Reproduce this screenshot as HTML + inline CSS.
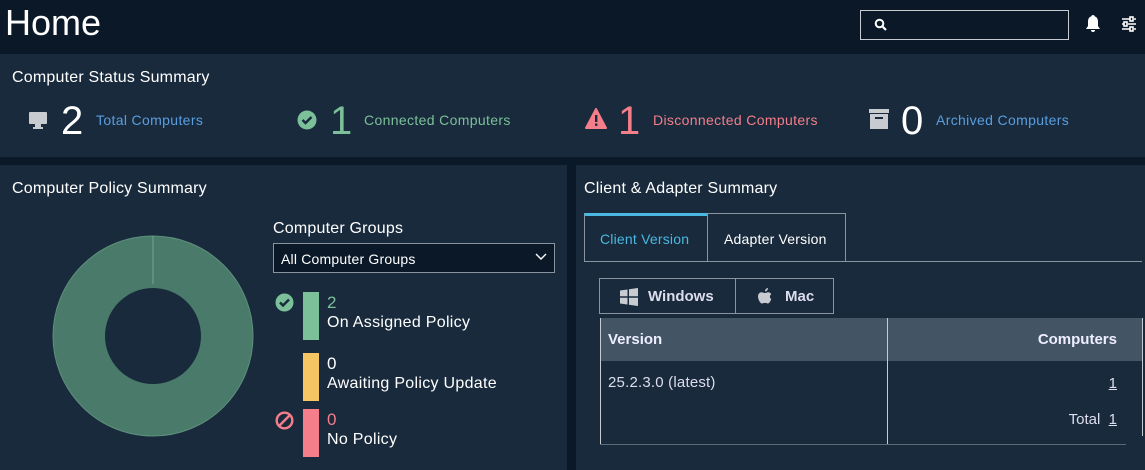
<!DOCTYPE html><html><head><style>
*{margin:0;padding:0;box-sizing:border-box}
body{width:1145px;height:470px;background:#0b1828;font-family:"Liberation Sans",sans-serif;color:#fff;position:relative;overflow:hidden}
.a{position:absolute}
.p{position:absolute;background:#182a3c}
.t{font-size:16px;color:#fff}
</style></head><body>
<div class="a" style="left:5px;top:2px;font-size:36px">Home</div>
<div class="a" style="left:860px;top:10px;width:209px;height:30px;border:1px solid #c8ccd0"></div>
<svg class="a" style="left:874px;top:18px" width="14" height="14"><circle cx="5.5" cy="5.5" r="3.8" stroke="#fff" stroke-width="2" fill="none"/><path d="M8 8l4 4" stroke="#fff" stroke-width="2.2"/></svg>
<svg class="a" style="left:1085px;top:14px" width="16" height="20"><path d="M8 1c-1 0-1.5.6-1.5 1.3C4 3 3 5 3 8v4l-2 3h14l-2-3V8c0-3-1-5-3.5-5.7C9.5 1.6 9 1 8 1zM6 16h4a2 2 0 0 1-4 0z" fill="#fff"/></svg>
<svg class="a" style="left:1121px;top:15px" width="16" height="18"><g stroke="#fff" stroke-width="1.6" fill="none"><path d="M1 4h8M13 4h2M1 9h2M7 9h8M1 14h8M13 14h2"/><rect x="9" y="2" width="3" height="4"/><rect x="3" y="7" width="3" height="4"/><rect x="9" y="12" width="3" height="4"/></g></svg>

<div class="p" style="left:0;top:54px;width:1145px;height:103px"></div>
<div class="a t" style="left:12px;top:69px;letter-spacing:0.2px">Computer Status Summary</div>
<svg class="a" style="left:28px;top:110px" width="22" height="20"><rect x="1" y="2" width="18" height="12" rx="1" fill="#c8ccd0"/><rect x="7" y="14" width="6" height="3" fill="#c8ccd0"/><rect x="5" y="17" width="10" height="2" fill="#c8ccd0"/></svg>
<div class="a" style="left:61px;top:97px;font-size:40px;line-height:48px">2</div>
<div class="a" style="left:96px;top:112px;font-size:14px;color:#5a9ee0;letter-spacing:0.35px">Total Computers</div>
<svg class="a" style="left:297px;top:110px" width="20" height="20"><circle cx="10" cy="10" r="9.5" fill="#7cc09a"/><path d="M5.5 10l3 3 6-6" stroke="#182a3c" stroke-width="2.4" fill="none"/></svg>
<div class="a" style="left:330px;top:97px;font-size:40px;line-height:48px;color:#7cc09a">1</div>
<div class="a" style="left:364px;top:112px;font-size:14px;color:#7cc09a;letter-spacing:0.35px">Connected Computers</div>
<svg class="a" style="left:585px;top:108px" width="22" height="22"><path d="M11 1L21 20H1z" fill="#f47e8a" stroke="#f47e8a" stroke-linejoin="round" stroke-width="2"/><rect x="10" y="7" width="2.4" height="7" fill="#182a3c"/><rect x="10" y="15.5" width="2.4" height="2.4" fill="#182a3c"/></svg>
<div class="a" style="left:618px;top:97px;font-size:40px;line-height:48px;color:#f47e8a">1</div>
<div class="a" style="left:653px;top:112px;font-size:14px;color:#f47e8a;letter-spacing:0.35px">Disconnected Computers</div>
<svg class="a" style="left:868px;top:108px" width="22" height="22"><rect x="1" y="1" width="20" height="4" fill="#c8ccd0"/><rect x="2" y="6" width="18" height="15" fill="#c8ccd0"/><rect x="7" y="9" width="8" height="2" fill="#182a3c"/></svg>
<div class="a" style="left:901px;top:97px;font-size:40px;line-height:48px">0</div>
<div class="a" style="left:936px;top:112px;font-size:14px;color:#5a9ee0;letter-spacing:0.35px">Archived Computers</div>

<div class="p" style="left:0;top:165px;width:567px;height:305px"></div>
<div class="a t" style="left:12px;top:180px;letter-spacing:0.2px">Computer Policy Summary</div>
<svg class="a" style="left:52px;top:235px" width="202" height="202"><circle cx="101" cy="101" r="74" stroke="#4a7a6a" stroke-width="52" fill="none"/><circle cx="101" cy="101" r="100" stroke="#5e907c" stroke-width="1" fill="none"/><path d="M101 1V49" stroke="#6ea08c" stroke-width="1.2"/></svg>
<div class="a t" style="left:273px;top:220px;letter-spacing:0.2px">Computer Groups</div>
<div class="a" style="left:273px;top:243px;width:282px;height:30px;background:#0b1828;border:1px solid #8a949e;font-size:14px;padding:7px 7px;letter-spacing:0.2px">All Computer Groups</div>
<svg class="a" style="left:535px;top:253px" width="12" height="8"><path d="M1 1l5 5 5-5" stroke="#fff" stroke-width="1.4" fill="none"/></svg>
<svg class="a" style="left:275px;top:293px" width="19" height="19"><circle cx="9.5" cy="9.5" r="9" fill="#7cc09a"/><path d="M5 9.5l3 3 6-6" stroke="#182a3c" stroke-width="2.4" fill="none"/></svg>
<div class="a" style="left:303px;top:292px;width:16px;height:48px;background:#7cc09a"></div>
<div class="a" style="left:327px;top:293px;font-size:17px;color:#7cc09a">2</div>
<div class="a t" style="left:327px;top:314px;letter-spacing:0.3px">On Assigned Policy</div>
<div class="a" style="left:303px;top:353px;width:16px;height:48px;background:#f5c563"></div>
<div class="a" style="left:327px;top:354px;font-size:17px">0</div>
<div class="a t" style="left:327px;top:375px;letter-spacing:0.3px">Awaiting Policy Update</div>
<svg class="a" style="left:275px;top:411px" width="19" height="19"><circle cx="9.5" cy="9.5" r="7.8" stroke="#f47e8a" stroke-width="2.4" fill="none"/><path d="M4 15L15 4" stroke="#f47e8a" stroke-width="2.4"/></svg>
<div class="a" style="left:303px;top:409px;width:16px;height:48px;background:#f47e8a"></div>
<div class="a" style="left:327px;top:410px;font-size:17px;color:#f47e8a">0</div>
<div class="a t" style="left:327px;top:431px;letter-spacing:0.3px">No Policy</div>

<div class="p" style="left:576px;top:165px;width:569px;height:305px"></div>
<div class="a t" style="left:584px;top:180px;letter-spacing:0.2px">Client &amp; Adapter Summary</div>
<div class="a" style="left:584px;top:261px;width:558px;height:1px;background:#8a949e"></div>
<div class="a" style="left:584px;top:213px;width:124px;height:49px;border:1px solid #8a949e;border-bottom:none;border-top:3px solid #4ab8e0;font-size:14px;color:#4ab8e0;padding:15px 0 0 15px;letter-spacing:0.2px">Client Version</div>
<div class="a" style="left:707px;top:213px;width:139px;height:49px;border:1px solid #8a949e;border-bottom:none;font-size:14px;padding:17px 0 0 16px;letter-spacing:0.2px">Adapter Version</div>
<div class="a" style="left:599px;top:278px;width:137px;height:36px;border:1px solid #8a949e;font-size:15px;font-weight:bold;color:#dde;padding:9px 0 0 48px">Windows</div>
<svg class="a" style="left:620px;top:288px" width="18" height="18"><g fill="#c8ccd0"><path d="M0 2.5L7.5 1.5V8.3H0zM9 1.3L18 0V8.3H9zM0 9.7H7.5V16.5L0 15.5zM9 9.7H18V18L9 16.7z"/></g></svg>
<div class="a" style="left:735px;top:278px;width:99px;height:36px;border:1px solid #8a949e;font-size:15px;font-weight:bold;color:#dde;padding:9px 0 0 49px">Mac</div>
<svg class="a" style="left:757px;top:287px" width="16" height="18"><path d="M11 1c0 2-1.5 3.5-3 3.5C8 2.5 9.5 1 11 1zM8 6c1 0 2-.7 3-.7 1.5 0 2.7.8 3.3 2-1.7 1-2 3.6 0 4.7-.7 2-2 4.5-3.5 4.5-1 0-1.5-.6-2.8-.6S6 16.5 5 16.5C3.3 16.5 1 12.5 1 9.5 1 7 2.7 5.3 4.6 5.3 5.8 5.3 7 6 8 6z" fill="#c8ccd0"/></svg>
<div class="a" style="left:600px;top:318px;width:543px;height:43px;background:#435564"></div>
<div class="a" style="left:600px;top:318px;width:1px;height:127px;background:#c8ccd0"></div>
<div class="a" style="left:887px;top:318px;width:1px;height:127px;background:#c8ccd0"></div>
<div class="a" style="left:1142px;top:318px;width:1px;height:118px;background:#c8ccd0"></div>
<div class="a" style="left:600px;top:444px;width:526px;height:1px;background:#5a6a78"></div>
<div class="a" style="left:608px;top:331px;font-size:15px;font-weight:bold;color:#eef">Version</div>
<div class="a" style="right:28px;top:331px;font-size:15px;font-weight:bold;color:#eef">Computers</div>
<div class="a" style="left:608px;top:374px;font-size:15px;color:#dde;letter-spacing:0.2px">25.2.3.0 (latest)</div>
<div class="a" style="right:28px;top:375px;font-size:15px;color:#dde;text-decoration:underline">1</div>
<div class="a" style="right:28px;top:411px;font-size:15px;color:#dde">Total&nbsp;&nbsp;<u>1</u></div>
</body></html>
